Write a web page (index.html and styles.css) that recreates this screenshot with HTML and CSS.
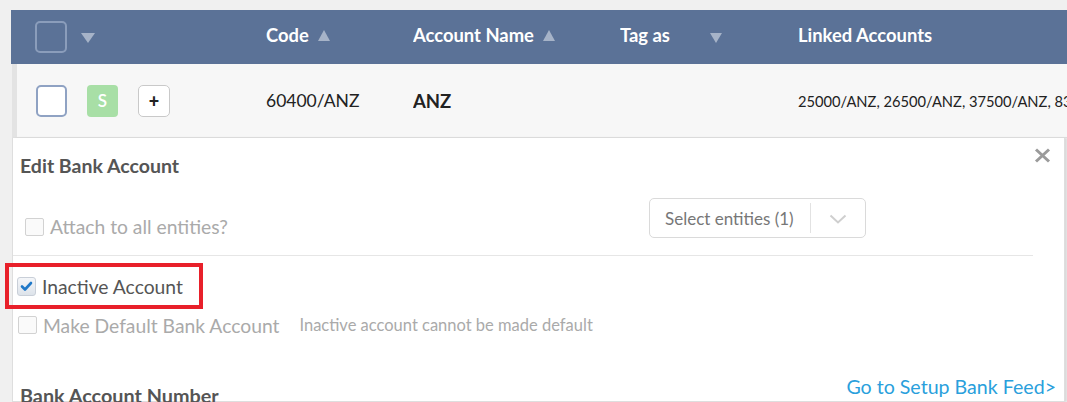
FILE: index.html
```html
<!DOCTYPE html>
<html>
<head>
<meta charset="utf-8">
<link rel="stylesheet" href="styles.css">
</head>
<body>
<div class="table">
  <div class="thead">
    <div class="col c-sel"><span class="hcheck"></span><span class="tri-down"></span></div>
    <div class="col c-code htext">Code<span class="tri-up"></span></div>
    <div class="col c-name htext">Account Name<span class="tri-up"></span></div>
    <div class="col c-tag htext">Tag as<span class="tri-down tag-tri"></span></div>
    <div class="col c-linked htext">Linked Accounts</div>
  </div>
  <div class="trow">
    <div class="col c-sel">
      <span class="rcheck"></span>
      <span class="badge">S</span>
      <span class="plus">+</span>
    </div>
    <div class="col c-code code-val">60400/ANZ</div>
    <div class="col c-name name-val">ANZ</div>
    <div class="col c-tag"></div>
    <div class="col c-linked linked-val">25000/ANZ, 26500/ANZ, 37500/ANZ, 83000/ANZ</div>
  </div>
  <div class="panel">
    <div class="panel-head">
      <div class="title">Edit Bank Account</div>
      <svg class="close" width="17" height="15" viewBox="0 0 17 15"><path d="M2 1.5 L15 13.5 M15 1.5 L2 13.5" stroke="#9b9b9b" stroke-width="3" fill="none"/></svg>
    </div>
    <div class="attach-row">
      <label class="opt disabled"><span class="cb"></span>Attach to all entities?</label>
      <div class="select">
        <span class="sel-text">Select entities (1)</span>
        <span class="sel-div"></span>
        <svg class="chev" width="18" height="10" viewBox="0 0 18 10"><path d="M1.5 1.5 L9 8.5 L16.5 1.5" stroke="#cfcfcf" stroke-width="2" fill="none"/></svg>
      </div>
    </div>
    <div class="divider"></div>
    <div class="inactive-row">
      <label class="opt active"><span class="cb checked"><svg width="13" height="11" viewBox="0 0 13 11"><path d="M2 5.5 L5 8.5 L11 2" stroke="#1f78c8" stroke-width="2.6" fill="none" stroke-linecap="round" stroke-linejoin="round"/></svg></span>Inactive Account</label>
      <span class="highlight"></span>
    </div>
    <div class="default-row">
      <label class="opt disabled"><span class="cb"></span>Make Default Bank Account</label>
      <span class="hint">Inactive account cannot be made default</span>
    </div>
    <div class="bottom-row">
      <div class="section">Bank Account Number</div>
      <a class="feed">Go to Setup Bank Feed&gt;</a>
    </div>
  </div>
</div>
</body>
</html>
```

FILE: styles.css
```css
* { box-sizing: border-box; }
html, body { margin: 0; padding: 0; }
body {
  background: #f0f0f0;
  font-family: "Lato", "Open Sans", sans-serif;
  color: #333;
  overflow: hidden;
  height: 402px;
}
.table {
  padding-top: 10px;
  padding-left: 11px;
}
.thead, .trow {
  display: grid;
  grid-template-columns: 255px 147px 207px 178px 1fr;
  align-items: center;
  width: 1056px;
}
.thead {
  height: 54px;
  background: #5b7297;
  color: #fff;
  font-weight: 700;
  font-size: 18.4px;
}
.col { display: flex; align-items: center; white-space: nowrap; overflow: hidden; }
.htext { padding-bottom: 5px; }
.thead .c-sel { padding-left: 24px; }
.hcheck {
  width: 32px; height: 32px;
  border: 2px solid #8b9dbb;
  border-radius: 5px;
}
.tri-down {
  width: 0; height: 0;
  border-left: 7px solid transparent;
  border-right: 7px solid transparent;
  border-top: 10px solid #a6b3c8;
  margin-left: 14px;
  margin-top: 2px;
}
.tag-tri { margin-left: 40px; border-left-width: 6px; border-right-width: 6px; margin-top: 6px; }
.tri-up {
  width: 0; height: 0;
  border-left: 6px solid transparent;
  border-right: 6px solid transparent;
  border-bottom: 11px solid #a6b3c8;
  margin-left: 9px;
  margin-top: 2px;
}
.trow {
  height: 74px;
  background: #f7f7f7;
  border-left: 5px solid #e3e3e3;
  border-bottom: 1px solid #dcdcdc;
  margin-left: 1px;
  width: 1055px;
  grid-template-columns: 249px 147px 207px 178px 1fr;
}
.trow .c-sel { padding-left: 19px; }
.rcheck {
  width: 31px; height: 32px;
  border: 2px solid #8fa2c3;
  border-radius: 5px;
  background: #fff;
}
.badge {
  width: 31px; height: 32px;
  margin-left: 20px;
  background: #a8dfa6;
  color: #fff;
  border-radius: 4px;
  font-size: 17px;
  font-weight: 600;
  display: flex; align-items: center; justify-content: center;
}
.plus {
  width: 32px; height: 32px;
  margin-left: 20px;
  background: #fff;
  border: 1px solid #c9c9c9;
  border-radius: 5px;
  font-weight: 900;
  font-size: 18px;
  color: #222;
  display: flex; align-items: center; justify-content: center;
  line-height: 1;
}
.code-val { font-size: 17.5px; color: #222; }
.name-val { font-size: 18.5px; font-weight: 700; color: #222; }
.linked-val { font-size: 14.7px; color: #222; }

.panel {
  margin-left: 1px;
  width: 1053px;
  height: 264px;
  background: #fff;
  border: 1px solid #dedede;
  border-top: none;
  box-shadow: 2px 0 2px #dadada;
  padding-left: 7px;
  position: relative;
}
.panel-head {
  display: flex;
  justify-content: space-between;
  align-items: flex-start;
  padding-top: 9px;
  padding-right: 10px;
}
.title {
  margin-top: 7px;
  font-size: 19.5px;
  font-weight: 700;
  color: #555;
}
.close { margin-top: 1px; margin-right: 3px; }
.attach-row {
  display: flex;
  align-items: flex-end;
  height: 40px;
  margin-top: 21px;
}
.opt {
  display: flex;
  align-items: center;
  font-size: 19.3px;
}
.opt.disabled { color: #aaa; }
.opt.active { color: #555; }
.cb {
  width: 19px; height: 18px;
  border: 1px solid #d2d2d2;
  border-radius: 2px;
  background: #fafafa;
  margin-right: 6px;
  display: inline-flex; align-items: center; justify-content: center;
}
.attach-row .opt { margin-left: 5px; margin-bottom: 0; }
.select {
  margin-left: auto;
  margin-right: 198px;
  width: 217px;
  height: 40px;
  border: 1px solid #dadada;
  border-radius: 5px;
  display: flex;
  align-items: center;
  padding-left: 15px;
}
.sel-text { font-size: 17px; color: #777; width: 145px; }
.sel-div { width: 1px; height: 30px; background: #e2e2e2; }
.chev { margin-left: 18px; margin-top: 2px; }
.divider {
  height: 1px;
  background: #e6e6e6;
  margin-left: -7px;
  width: 1020px;
  margin-top: 17px;
}
.inactive-row {
  position: relative;
  height: 20px;
  margin-top: 20px;
  margin-left: -3px;
  display: flex;
  align-items: center;
}
.cb.checked {
  width: 19px; height: 19px;
  border: 1px solid #c9cfd8;
  border-radius: 3px;
  background: linear-gradient(#f4f6f9, #dde3ea);
  margin-right: 6px;
}
.highlight {
  position: absolute;
  left: -12px;
  top: -13px;
  width: 198px;
  height: 46px;
  border: 4px solid #e8202a;
}
.default-row {
  display: flex;
  align-items: center;
  height: 20px;
  margin-top: 19px;
  margin-left: -2px;
}
.hint {
  margin-left: 20px;
  font-size: 16.5px;
  color: #aaa;
}
.bottom-row {
  display: flex;
  justify-content: space-between;
  align-items: flex-start;
  margin-top: 40px;
  padding-right: 8px;
}
.section {
  margin-top: 8px;
  font-size: 19.8px;
  font-weight: 700;
  color: #555;
}
.feed {
  font-size: 19.6px;
  color: #2a9fdc;
  text-decoration: none;
}
```
